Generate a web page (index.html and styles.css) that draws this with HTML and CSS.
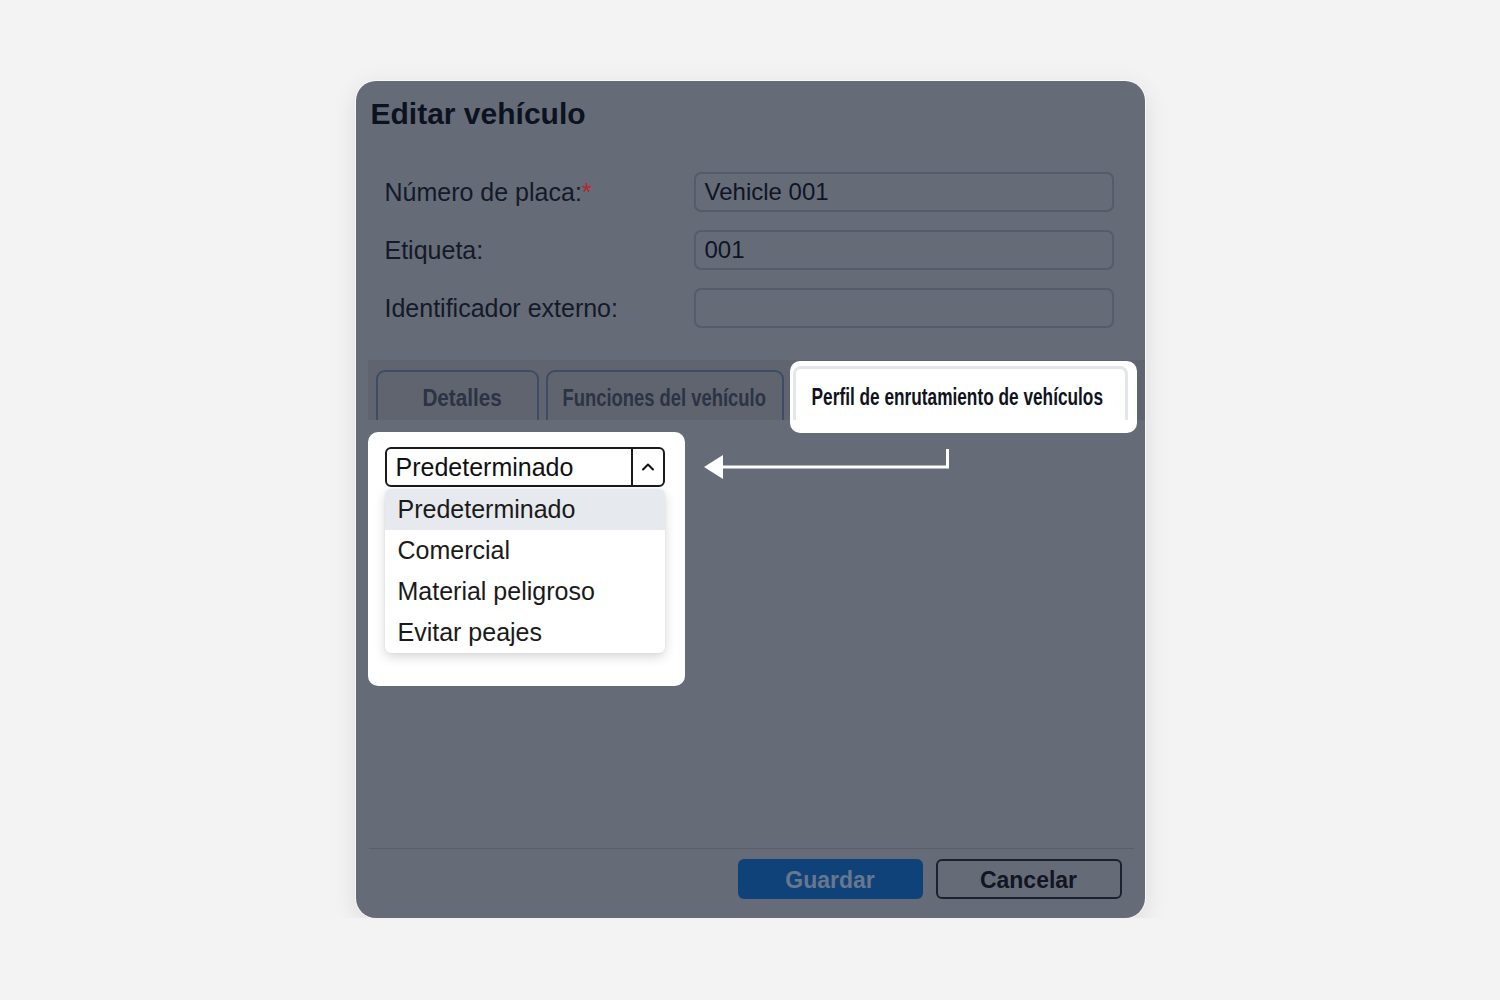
FILE: index.html
```html
<!DOCTYPE html>
<html lang="es">
<head>
<meta charset="utf-8">
<title>Editar vehículo</title>
<link rel="stylesheet" href="styles.css">
</head>
<body>
<div class="page">
  <div class="modal">
    <h1 class="title">Editar vehículo</h1>
    <div class="form">
      <div class="row">
        <label class="label">Número de placa:<span class="req">*</span></label>
        <div class="input">Vehicle 001</div>
      </div>
      <div class="row">
        <label class="label">Etiqueta:</label>
        <div class="input">001</div>
      </div>
      <div class="row">
        <label class="label">Identificador externo:</label>
        <div class="input"></div>
      </div>
    </div>
    <div class="tabs">
      <div class="tab tab-details"><span class="tab-text narrow-1">Detalles</span></div>
      <div class="tab tab-functions"><span class="tab-text narrow-2">Funciones del vehículo</span></div>
      <div class="tab-highlight">
        <div class="tab-active"><span class="tab-text narrow-3">Perfil de enrutamiento de vehículos</span></div>
      </div>
    </div>
    <div class="content">
      <div class="select-highlight">
        <div class="select">
          <span class="select-value">Predeterminado</span>
          <span class="select-btn">
            <svg width="14" height="10" viewBox="0 0 14 10"><path d="M2 7.5 L7 2.5 L12 7.5" fill="none" stroke="#111" stroke-width="2" stroke-linecap="round" stroke-linejoin="round"/></svg>
          </span>
        </div>
        <ul class="options">
          <li class="option selected">Predeterminado</li>
          <li class="option">Comercial</li>
          <li class="option">Material peligroso</li>
          <li class="option">Evitar peajes</li>
        </ul>
      </div>
      <svg class="arrow" width="248" height="34" viewBox="0 0 248 34">
        <path d="M18 18 H243.5 V0" fill="none" stroke="#ffffff" stroke-width="3"/>
        <path d="M0 18 L19 6 L19 30 Z" fill="#ffffff"/>
      </svg>
    </div>
    <div class="footer">
      <button class="btn btn-save">Guardar</button>
      <button class="btn btn-cancel">Cancelar</button>
    </div>
  </div>
</div>
</body>
</html>
```

FILE: styles.css
```css
html, body {
  margin: 0;
  padding: 0;
}
body {
  background: #f3f3f3;
  font-family: "Liberation Sans", Arial, sans-serif;
}
.page {
  display: flex;
  justify-content: center;
  padding-top: 81px;
}
.modal {
  width: 789px;
  height: 837px;
  box-sizing: border-box;
  background: #666b78;
  border-radius: 20px;
  box-shadow: 0 0 0 1px rgba(255,255,255,0.7), 0 6px 24px rgba(0,0,0,0.10);
  display: flex;
  flex-direction: column;
  overflow: hidden;
}
.title {
  margin: 0;
  padding: 15px 0 0 15px;
  font-size: 30px;
  line-height: 36px;
  font-weight: bold;
  color: #0c1220;
}
.form {
  margin-top: 40px;
  padding: 0 31px 0 29px;
  display: flex;
  flex-direction: column;
  gap: 18px;
}
.row {
  display: flex;
  align-items: center;
  height: 40px;
}
.label {
  width: 309px;
  font-size: 25px;
  color: #141a28;
}
.req {
  color: #b3262a;
}
.input {
  flex: 1;
  height: 40px;
  box-sizing: border-box;
  border: 2px solid #555b69;
  border-radius: 7px;
  padding: 0 9px;
  font-size: 24px;
  line-height: 36px;
  color: #0f1524;
}
.tabs {
  margin-top: 32px;
  margin-left: 12px;
  height: 60px;
  box-sizing: border-box;
  padding: 10px 0 0 8px;
  background: #60646f;
  display: flex;
  align-items: flex-start;
}
.tab {
  height: 50px;
  box-sizing: border-box;
  border: 2px solid #3e4c66;
  border-bottom: none;
  border-radius: 9px 9px 0 0;
  display: flex;
  align-items: center;
  justify-content: center;
  color: #2b3345;
  padding-top: 4px;
}
.tab-text {
  display: inline-block;
  white-space: nowrap;
  font-family: "Liberation Sans", Arial, sans-serif;
  font-weight: bold;
  font-size: 23px;
  transform-origin: center;
}
.narrow-1 {
  transform: scaleX(0.9);
}
.narrow-2 {
  transform: scaleX(0.8);
}
.narrow-3 {
  transform: scaleX(0.75);
}
.tab-details {
  width: 163px;
  padding-left: 10px;
}
.tab-functions {
  width: 238px;
  margin-left: 7px;
}
.tab-highlight {
  margin-left: 6px;
  margin-top: -9px;
  width: 347px;
  height: 72px;
  box-sizing: border-box;
  background: #ffffff;
  border-radius: 10px;
  padding: 5px 9px 13px 3px;
  position: relative;
  z-index: 1;
}
.tab-active {
  height: 54px;
  box-sizing: border-box;
  border: 3px solid #e3e7ec;
  border-bottom: none;
  border-radius: 8px 8px 0 0;
  display: flex;
  align-items: center;
  justify-content: center;
  color: #10131c;
  padding-top: 5px;
  padding-right: 6px;
}
.content {
  flex: 1;
  display: flex;
  align-items: flex-start;
  padding: 12px 0 0 12px;
}
.select-highlight {
  width: 317px;
  box-sizing: border-box;
  background: #ffffff;
  border-radius: 10px;
  padding: 15px 20px 33px 17px;
}
.select {
  height: 40px;
  box-sizing: border-box;
  border: 2px solid #1a1a1a;
  border-radius: 6px;
  display: flex;
  align-items: center;
}
.select-value {
  flex: 1;
  padding-left: 9px;
  font-size: 25px;
  color: #111111;
}
.select-btn {
  width: 30px;
  height: 100%;
  border-left: 2px solid #1a1a1a;
  display: flex;
  align-items: center;
  justify-content: center;
}
.options {
  list-style: none;
  margin: 2px 0 0 0;
  padding: 0;
  background: #ffffff;
  border-radius: 6px;
  box-shadow: 0 4px 12px rgba(0,0,0,0.16), 0 0 2px rgba(0,0,0,0.08);
  overflow: hidden;
}
.option {
  height: 41px;
  display: flex;
  align-items: center;
  padding-left: 13px;
  font-size: 25px;
  color: #1a1a1a;
}
.option.selected {
  background: #e6e9ed;
}
.arrow {
  margin-left: 19px;
  margin-top: 17px;
}
.footer {
  margin: 0 11px 0 13px;
  border-top: 1px solid #5a5e69;
  padding: 10px 12px 19px 0;
  display: flex;
  justify-content: flex-end;
  gap: 13px;
}
.btn {
  height: 40px;
  box-sizing: border-box;
  border-radius: 6px;
  font-family: "Liberation Sans", Arial, sans-serif;
  font-weight: bold;
  font-size: 23px;
  padding: 3px 0 0 0;
}
.btn-save {
  width: 185px;
  background: #10427a;
  border: none;
  color: #68778e;
}
.btn-cancel {
  width: 186px;
  background: transparent;
  border: 2px solid #1c2130;
  color: #111622;
}
```
